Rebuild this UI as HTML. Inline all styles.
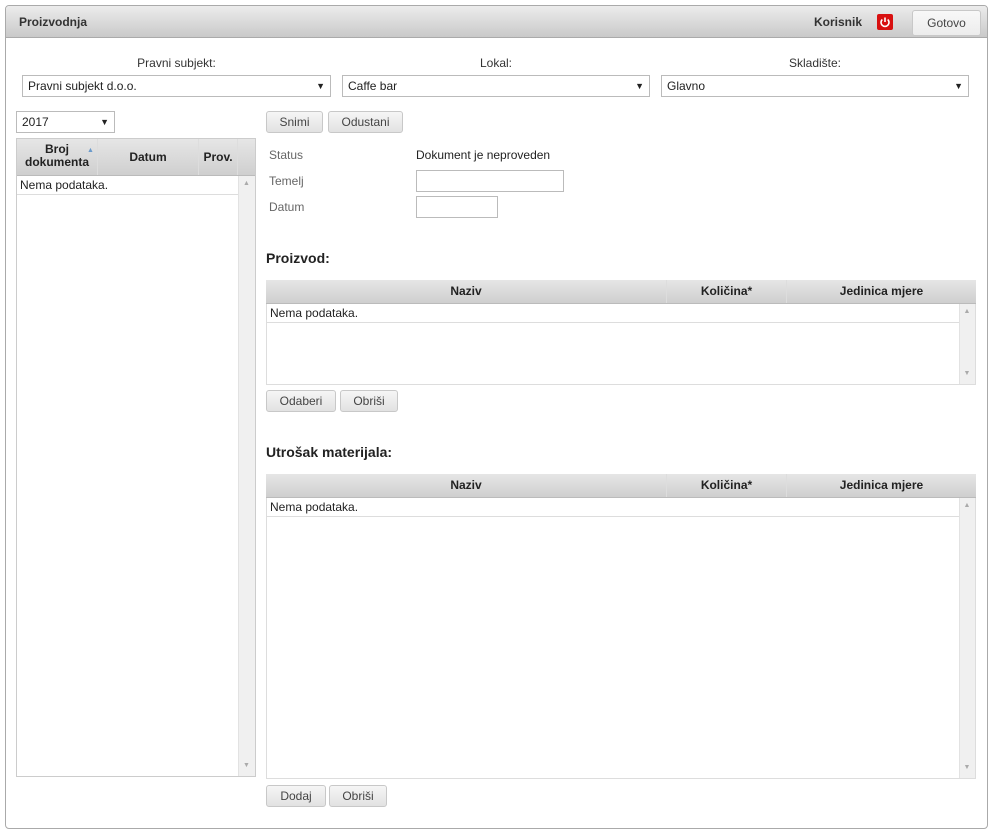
<!DOCTYPE html>
<html><head><meta charset="utf-8"><style>
*{box-sizing:border-box}
body{margin:0;width:993px;height:833px;background:#fff;font-family:"Liberation Sans",Arial,sans-serif;font-size:12px;color:#222;position:relative;overflow:hidden}
.a{position:absolute}
.panel{left:5px;top:5px;width:983px;height:824px;border:1px solid #aaa;border-radius:4px;background:#fff}
.hdr{left:6px;top:6px;width:981px;height:32px;background:linear-gradient(#ececec,#c9c9c9);border-bottom:1px solid #aaa;border-radius:3px 3px 0 0}
.btn{position:absolute;height:22px;border:1px solid #c8c8c8;border-radius:3px;background:linear-gradient(#f6f6f6,#e2e2e2);color:#444;text-align:center;line-height:20px;font-size:12px}
.sel{position:absolute;height:22px;border:1px solid #bbb;background:#fff;padding-left:5px;line-height:20px}
.sel:after{content:"▼";position:absolute;right:5px;top:0;font-size:9px}
.inp{position:absolute;border:1px solid #bbb;background:#fff}
.gh{position:absolute;background:linear-gradient(#e6e6e6,#cfcfcf);font-weight:bold;text-align:center;border-bottom:1px solid #bbb}
.col{position:absolute;top:0;bottom:0;border-right:1px solid #ddd}
.sb{position:absolute;background:#f0f0f0;border-left:1px solid #e2e2e2}
.lbl{position:absolute;color:#666}
</style></head><body>
<div class="a panel"></div>
<div class="a hdr"></div>
<div class="a" style="left:19px;top:15px;font-weight:bold;color:#333">Proizvodnja</div>
<div class="a" style="left:814px;top:15px;font-weight:bold;color:#333">Korisnik</div>
<div class="a" style="left:877px;top:14px;width:16px;height:16px;background:#d81010;border-radius:2px"><svg width="16" height="16" viewBox="0 0 16 16"><path d="M5.3 5.5A4 4 0 1 0 10.7 5.5" fill="none" stroke="#fff" stroke-width="1.6"/><path d="M8 3.5V8" stroke="#fff" stroke-width="1.6"/></svg></div>
<div class="btn" style="left:912px;top:10px;width:69px;height:26px;line-height:24px;background:linear-gradient(#f8f8f8,#ececec)">Gotovo</div>

<div class="a" style="left:22px;top:56px;width:309px;text-align:center;color:#333">Pravni subjekt:</div>
<div class="a" style="left:342px;top:56px;width:308px;text-align:center;color:#333">Lokal:</div>
<div class="a" style="left:661px;top:56px;width:308px;text-align:center;color:#333">Skladište:</div>
<div class="sel" style="left:22px;top:75px;width:309px">Pravni subjekt d.o.o.</div>
<div class="sel" style="left:342px;top:75px;width:308px">Caffe bar</div>
<div class="sel" style="left:661px;top:75px;width:308px">Glavno</div>

<div class="sel" style="left:16px;top:111px;width:99px">2017</div>
<div class="a" style="left:16px;top:138px;width:240px;height:639px;border:1px solid #ccc"></div>
<div class="gh" style="left:17px;top:139px;width:238px;height:37px">
 <div class="col" style="left:0;width:81px;padding-top:4px;line-height:13px">Broj<br>dokumenta</div>
 <div class="a" style="left:70px;top:8px;font-size:7px;color:#6a9acb">▲</div>
 <div class="col" style="left:81px;width:101px;line-height:36px">Datum</div>
 <div class="col" style="left:182px;width:39px;line-height:36px">Prov.</div>
</div>
<div class="sb" style="left:238px;top:176px;width:17px;height:600px"></div>
<div class="a" style="left:238px;top:180px;width:17px;text-align:center;font-size:7px;color:#aaa">▲</div>
<div class="a" style="left:238px;top:762px;width:17px;text-align:center;font-size:7px;color:#aaa">▼</div>
<div class="a" style="left:20px;top:178px">Nema podataka.</div>
<div class="a" style="left:17px;top:194px;width:221px;height:1px;background:#ddd"></div>

<div class="btn" style="left:266px;top:111px;width:57px">Snimi</div>
<div class="btn" style="left:328px;top:111px;width:75px">Odustani</div>
<div class="lbl" style="left:269px;top:148px">Status</div>
<div class="a" style="left:416px;top:148px">Dokument je neproveden</div>
<div class="lbl" style="left:269px;top:174px">Temelj</div>
<div class="inp" style="left:416px;top:170px;width:148px;height:22px"></div>
<div class="lbl" style="left:269px;top:200px">Datum</div>
<div class="inp" style="left:416px;top:196px;width:82px;height:22px"></div>

<div class="a" style="left:266px;top:250px;font-weight:bold;font-size:14px">Proizvod:</div>
<div class="a" style="left:266px;top:280px;width:710px;height:105px;border:1px solid #ddd"></div>
<div class="gh" style="left:266px;top:280px;width:710px;height:24px;line-height:23px">
 <div class="col" style="left:0;width:401px">Naziv</div>
 <div class="col" style="left:401px;width:120px">Količina*</div>
 <div class="col" style="left:521px;width:189px;border:none">Jedinica mjere</div>
</div>
<div class="sb" style="left:959px;top:304px;width:16px;height:80px"></div>
<div class="a" style="left:959px;top:308px;width:16px;text-align:center;font-size:7px;color:#aaa">▲</div>
<div class="a" style="left:959px;top:370px;width:16px;text-align:center;font-size:7px;color:#aaa">▼</div>
<div class="a" style="left:270px;top:306px">Nema podataka.</div>
<div class="a" style="left:267px;top:322px;width:692px;height:1px;background:#ddd"></div>
<div class="btn" style="left:266px;top:390px;width:70px">Odaberi</div>
<div class="btn" style="left:340px;top:390px;width:58px">Obriši</div>

<div class="a" style="left:266px;top:444px;font-weight:bold;font-size:14px">Utrošak materijala:</div>
<div class="a" style="left:266px;top:474px;width:710px;height:305px;border:1px solid #ddd"></div>
<div class="gh" style="left:266px;top:474px;width:710px;height:24px;line-height:23px">
 <div class="col" style="left:0;width:401px">Naziv</div>
 <div class="col" style="left:401px;width:120px">Količina*</div>
 <div class="col" style="left:521px;width:189px;border:none">Jedinica mjere</div>
</div>
<div class="sb" style="left:959px;top:498px;width:16px;height:280px"></div>
<div class="a" style="left:959px;top:502px;width:16px;text-align:center;font-size:7px;color:#aaa">▲</div>
<div class="a" style="left:959px;top:764px;width:16px;text-align:center;font-size:7px;color:#aaa">▼</div>
<div class="a" style="left:270px;top:500px">Nema podataka.</div>
<div class="a" style="left:267px;top:516px;width:692px;height:1px;background:#ddd"></div>
<div class="btn" style="left:266px;top:785px;width:60px">Dodaj</div>
<div class="btn" style="left:329px;top:785px;width:58px">Obriši</div>
</body></html>
